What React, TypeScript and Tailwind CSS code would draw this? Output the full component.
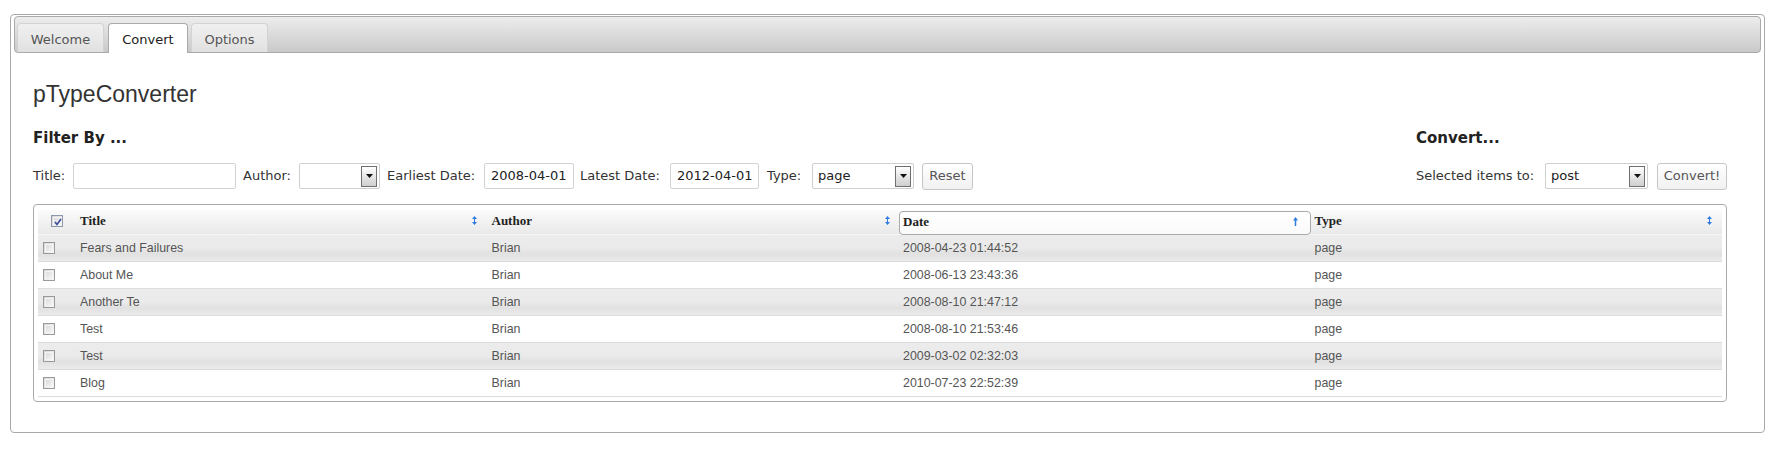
const rows = [
  { title: "Fears and Failures", author: "Brian", date: "2008-04-23 01:44:52", type: "page" },
  { title: "About Me", author: "Brian", date: "2008-06-13 23:43:36", type: "page" },
  { title: "Another Te", author: "Brian", date: "2008-08-10 21:47:12", type: "page" },
  { title: "Test", author: "Brian", date: "2008-08-10 21:53:46", type: "page" },
  { title: "Test", author: "Brian", date: "2009-03-02 02:32:03", type: "page" },
  { title: "Blog", author: "Brian", date: "2010-07-23 22:52:39", type: "page" },
];

function SortBoth() {
  return (
    <svg width="5" height="9" viewBox="0 0 5 9" className="shrink-0">
      <path d="M2.5 0 L5 3 L0 3 Z M2.5 9 L5 6 L0 6 Z" fill="#2f7be0" />
      <rect x="2" y="2.5" width="1" height="4" fill="#2f7be0" />
    </svg>
  );
}

function SortUp() {
  return (
    <svg width="5" height="9" viewBox="0 0 5 9" className="shrink-0">
      <path d="M2.5 0 L5 3.5 L0 3.5 Z" fill="#2f7be0" />
      <rect x="1.75" y="3" width="1.5" height="6" fill="#2f7be0" />
    </svg>
  );
}

function Checkbox({ checked = false }: { checked?: boolean }) {
  return (
    <div
      className={`w-[12px] h-[12px] border ${
        checked ? "border-[#8d97ad]" : "border-[#9a9a9a]"
      } bg-gradient-to-br from-[#d5d5d5] to-[#fafafa] p-px`}
    >
      <div className="w-full h-full border border-[#f4f4f4] relative">
        {checked && (
          <svg width="10" height="10" viewBox="0 0 10 10" className="absolute -left-px -top-px">
            <path d="M2 5 L4 7.5 L8 2" stroke="#3c4c9a" strokeWidth="1.6" fill="none" />
          </svg>
        )}
      </div>
    </div>
  );
}

function SelectArrow() {
  return (
    <div className="w-[16px] h-[21px] border border-[#6f6f6f] bg-gradient-to-b from-[#ffffff] to-[#cfcfcf] flex items-center justify-center">
      <svg width="7" height="4" viewBox="0 0 7 4">
        <path d="M0 0 L7 0 L3.5 4 Z" fill="#111" />
      </svg>
    </div>
  );
}

function Select({ value, width }: { value: string; width: string }) {
  return (
    <div
      className={`${width} shrink-0 h-[26px] border border-[#cfcfcf] rounded-[2px] bg-white flex items-center justify-between pl-[5px] pr-[2px] text-[#222]`}
    >
      <span>{value}</span>
      <SelectArrow />
    </div>
  );
}

function TextInput({ value, width }: { value?: string; width: string }) {
  return (
    <div
      className={`${width} shrink-0 h-[26px] border border-[#d3d3d3] rounded-[2px] bg-white flex items-center pl-[6px] text-[#222]`}
    >
      {value}
    </div>
  );
}

function Button({ label, width }: { label: string; width: string }) {
  return (
    <div
      className={`${width} shrink-0 h-[27px] border border-[#c6c6c6] rounded-[3px] bg-gradient-to-b from-[#ffffff] to-[#f1f1f1] flex items-center justify-center text-[#555]`}
    >
      {label}
    </div>
  );
}

export default function App() {
  const verdana = "font-['DejaVu_Sans',Verdana,sans-serif]";
  return (
    <div className={`w-[1765px] h-[463px] bg-white pt-[14px] pl-[10px] ${verdana} text-[13px] text-[#333]`}>
      <div className="border border-[#aaaaaa] rounded-[4px] pt-px px-[3px] pb-[3px] bg-white">
        {/* tabs */}
        <div className="h-[37px] border border-[#aaaaaa] rounded-[4px] bg-gradient-to-b from-[#ededed] to-[#c9c9c9] flex items-start pt-[6px] pl-[2px]">
          <div className="w-[87px] h-[29px] border border-b-0 border-[#d3d3d3] rounded-t-[4px] bg-gradient-to-b from-[#f0f0f0] to-[#e1e1e1] text-[#555] text-center pt-[8px] leading-[16px]">
            Welcome
          </div>
          <div className="ml-[4px] w-[80px] h-[30px] border border-b-0 border-[#aaaaaa] rounded-t-[4px] bg-white text-[#212121] text-center pt-[8px] leading-[16px]">
            Convert
          </div>
          <div className="ml-[3px] w-[77px] h-[29px] border border-b-0 border-[#d3d3d3] rounded-t-[4px] bg-gradient-to-b from-[#f0f0f0] to-[#e1e1e1] text-[#555] text-center pt-[8px] leading-[16px]">
            Options
          </div>
        </div>

        {/* panel */}
        <div className="pt-[28px] pl-[19px] pr-[34px] pb-[27px]">
          <h2 className="font-['Liberation_Sans',Arial,sans-serif] text-[23px] leading-[26px] text-[#333]">
            pTypeConverter
          </h2>

          <div className="flex justify-between mt-[22px]">
            <div>
              <h3 className="font-bold text-[15px] leading-[18px] text-[#222]">Filter By ...</h3>
              <div className="mt-[16px] h-[26px] flex items-center">
                <span className="w-[40px] shrink-0">Title:</span>
                <TextInput width="w-[163px]" />
                <span className="w-[63px] shrink-0 pl-[7px]">Author:</span>
                <Select value="" width="w-[81px]" />
                <span className="w-[104px] shrink-0 pl-[7px]">Earliest Date:</span>
                <TextInput value="2008-04-01" width="w-[90px]" />
                <span className="w-[96px] shrink-0 pl-[6px]">Latest Date:</span>
                <TextInput value="2012-04-01" width="w-[89px]" />
                <span className="w-[53px] shrink-0 pl-[8px]">Type:</span>
                <Select value="page" width="w-[102px]" />
                <div className="ml-[8px]">
                  <Button label="Reset" width="w-[51px]" />
                </div>
              </div>
            </div>

            <div className="w-[311px]">
              <h3 className="font-bold text-[15px] leading-[18px] text-[#222]">Convert...</h3>
              <div className="mt-[16px] h-[26px] flex items-center justify-between">
                <span>Selected items to:</span>
                <div className="flex items-center">
                  <Select value="post" width="w-[103px]" />
                  <div className="ml-[9px]">
                    <Button label="Convert!" width="w-[70px]" />
                  </div>
                </div>
              </div>
            </div>
          </div>

          {/* table */}
          <div className="mt-[15px] border border-[#aaaaaa] rounded-[4px] pt-[5px] px-[4px] pb-[4px]">
            <div className="h-[25px] grid grid-cols-[38px_repeat(4,minmax(0,1fr))] bg-gradient-to-b from-[#fbfbfb] to-[#e9e9e9] border-b border-[#f6f6f6] font-['Liberation_Serif','Times_New_Roman',serif] font-bold text-[13px] text-[#222]">
              <div className="flex items-center pl-[13px] pb-[3px]">
                <Checkbox checked />
              </div>
              <div className="flex items-center justify-between pl-[4px] pr-[11px] pb-[4px]">
                <span>Title</span>
                <SortBoth />
              </div>
              <div className="flex items-center justify-between pl-[4px] pr-[9px] pb-[4px]">
                <span>Author</span>
                <SortBoth />
              </div>
              <div className="pt-px">
                <div className="h-[24px] border border-[#aaaaaa] rounded-[4px] bg-gradient-to-b from-white to-[#fafafa] flex items-center justify-between pl-[3px] pr-[12px] pb-[3px]">
                  <span>Date</span>
                  <SortUp />
                </div>
              </div>
              <div className="flex items-center justify-between pl-[4px] pr-[10px] pb-[4px]">
                <span>Type</span>
                <SortBoth />
              </div>
            </div>

            {rows.map((r, i) => (
              <div
                key={i}
                className={`h-[27px] grid grid-cols-[38px_repeat(4,minmax(0,1fr))] items-center border-b border-[#dcdcdc] font-['Liberation_Sans',Arial,sans-serif] text-[12.4px] text-[#555] ${
                  i % 2 === 0
                    ? "bg-[linear-gradient(to_bottom,#ececec_0%,#eaeaea_50%,#e1e1e1_72%,#ebebeb_100%)]"
                    : "bg-white"
                }`}
              >
                <div className="pl-[5px]">
                  <Checkbox />
                </div>
                <div className="pl-[4px]">{r.title}</div>
                <div className="pl-[4px]">{r.author}</div>
                <div className="pl-[4px]">{r.date}</div>
                <div className="pl-[4px]">{r.type}</div>
              </div>
            ))}
          </div>
        </div>
      </div>
    </div>
  );
}
